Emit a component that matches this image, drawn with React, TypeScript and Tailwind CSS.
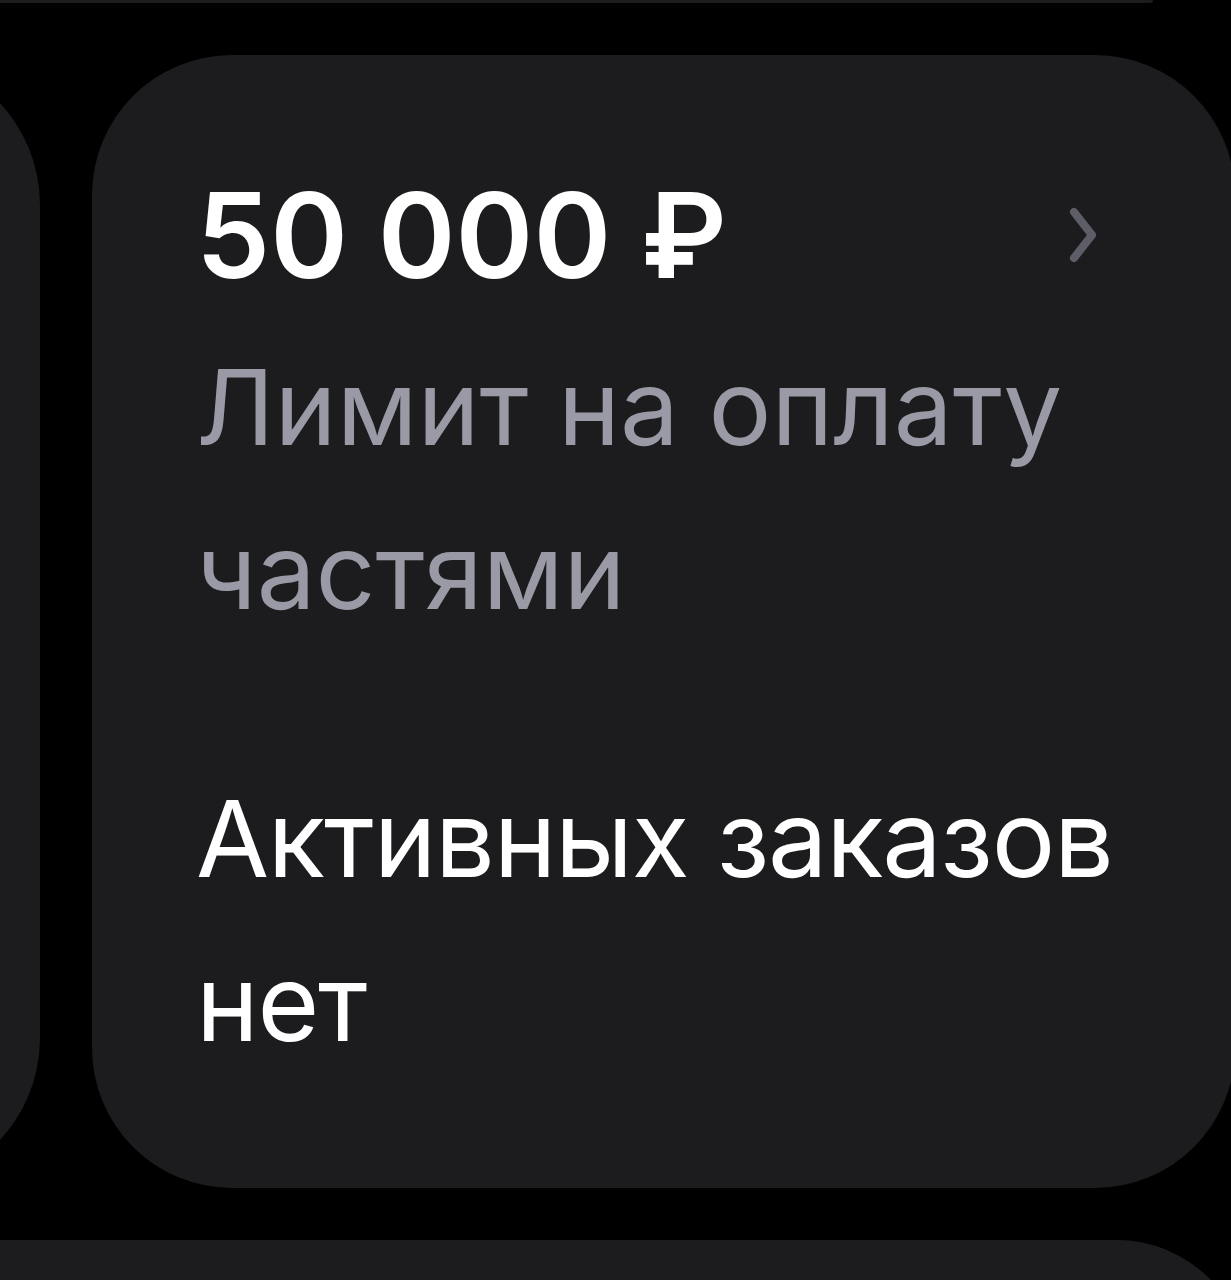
const font = { fontFamily: "Inter, 'Noto Sans', sans-serif" };

function Chevron() {
  return (
    <svg width="40" height="60" viewBox="0 0 40 60" fill="none" className="shrink-0">
      <path d="M11 7 L29 30 L11 53" stroke="#5d5d67" strokeWidth="8" strokeLinecap="round" strokeLinejoin="round" />
    </svg>
  );
}

export default function App() {
  return (
    <div className="flex h-[1280px] w-full flex-col gap-[52px] overflow-hidden bg-black" style={font}>
      {/* bottom of the previous card */}
      <div className="h-[3px] w-[1153px] shrink-0 rounded-br-[3px] bg-[#1c1c1f]" />

      <div className="flex h-[1133px] shrink-0 gap-[52px]">
        {/* card to the left, mostly scrolled off */}
        <div className="-ml-[1100px] w-[1140px] shrink-0 rounded-[150px] bg-[#1c1c1f]" />

        <div className="flex w-[1143px] shrink-0 flex-col rounded-[140px] bg-[#1c1c1f] pl-[104px] pr-[40px] pt-[121px]">
          <div className="flex items-center justify-between">
            <span className="text-[118px] font-semibold leading-[118px] text-white">50 000 ₽</span>
            <div className="mr-[92px]">
              <Chevron />
            </div>
          </div>
          <p className="mt-[31px] text-[105px] font-normal leading-[164px] text-[#9a9aa6]">
            Лимит на оплату частями
          </p>
          <p className="mt-[104px] text-[106px] font-normal leading-[164px] tracking-[-1.3px] text-white">
            Активных заказов нет
          </p>
        </div>
      </div>

      {/* next card */}
      <div className="h-[200px] w-[1247px] shrink-0 rounded-tr-[130px] bg-[#1c1c1f]" />
    </div>
  );
}
